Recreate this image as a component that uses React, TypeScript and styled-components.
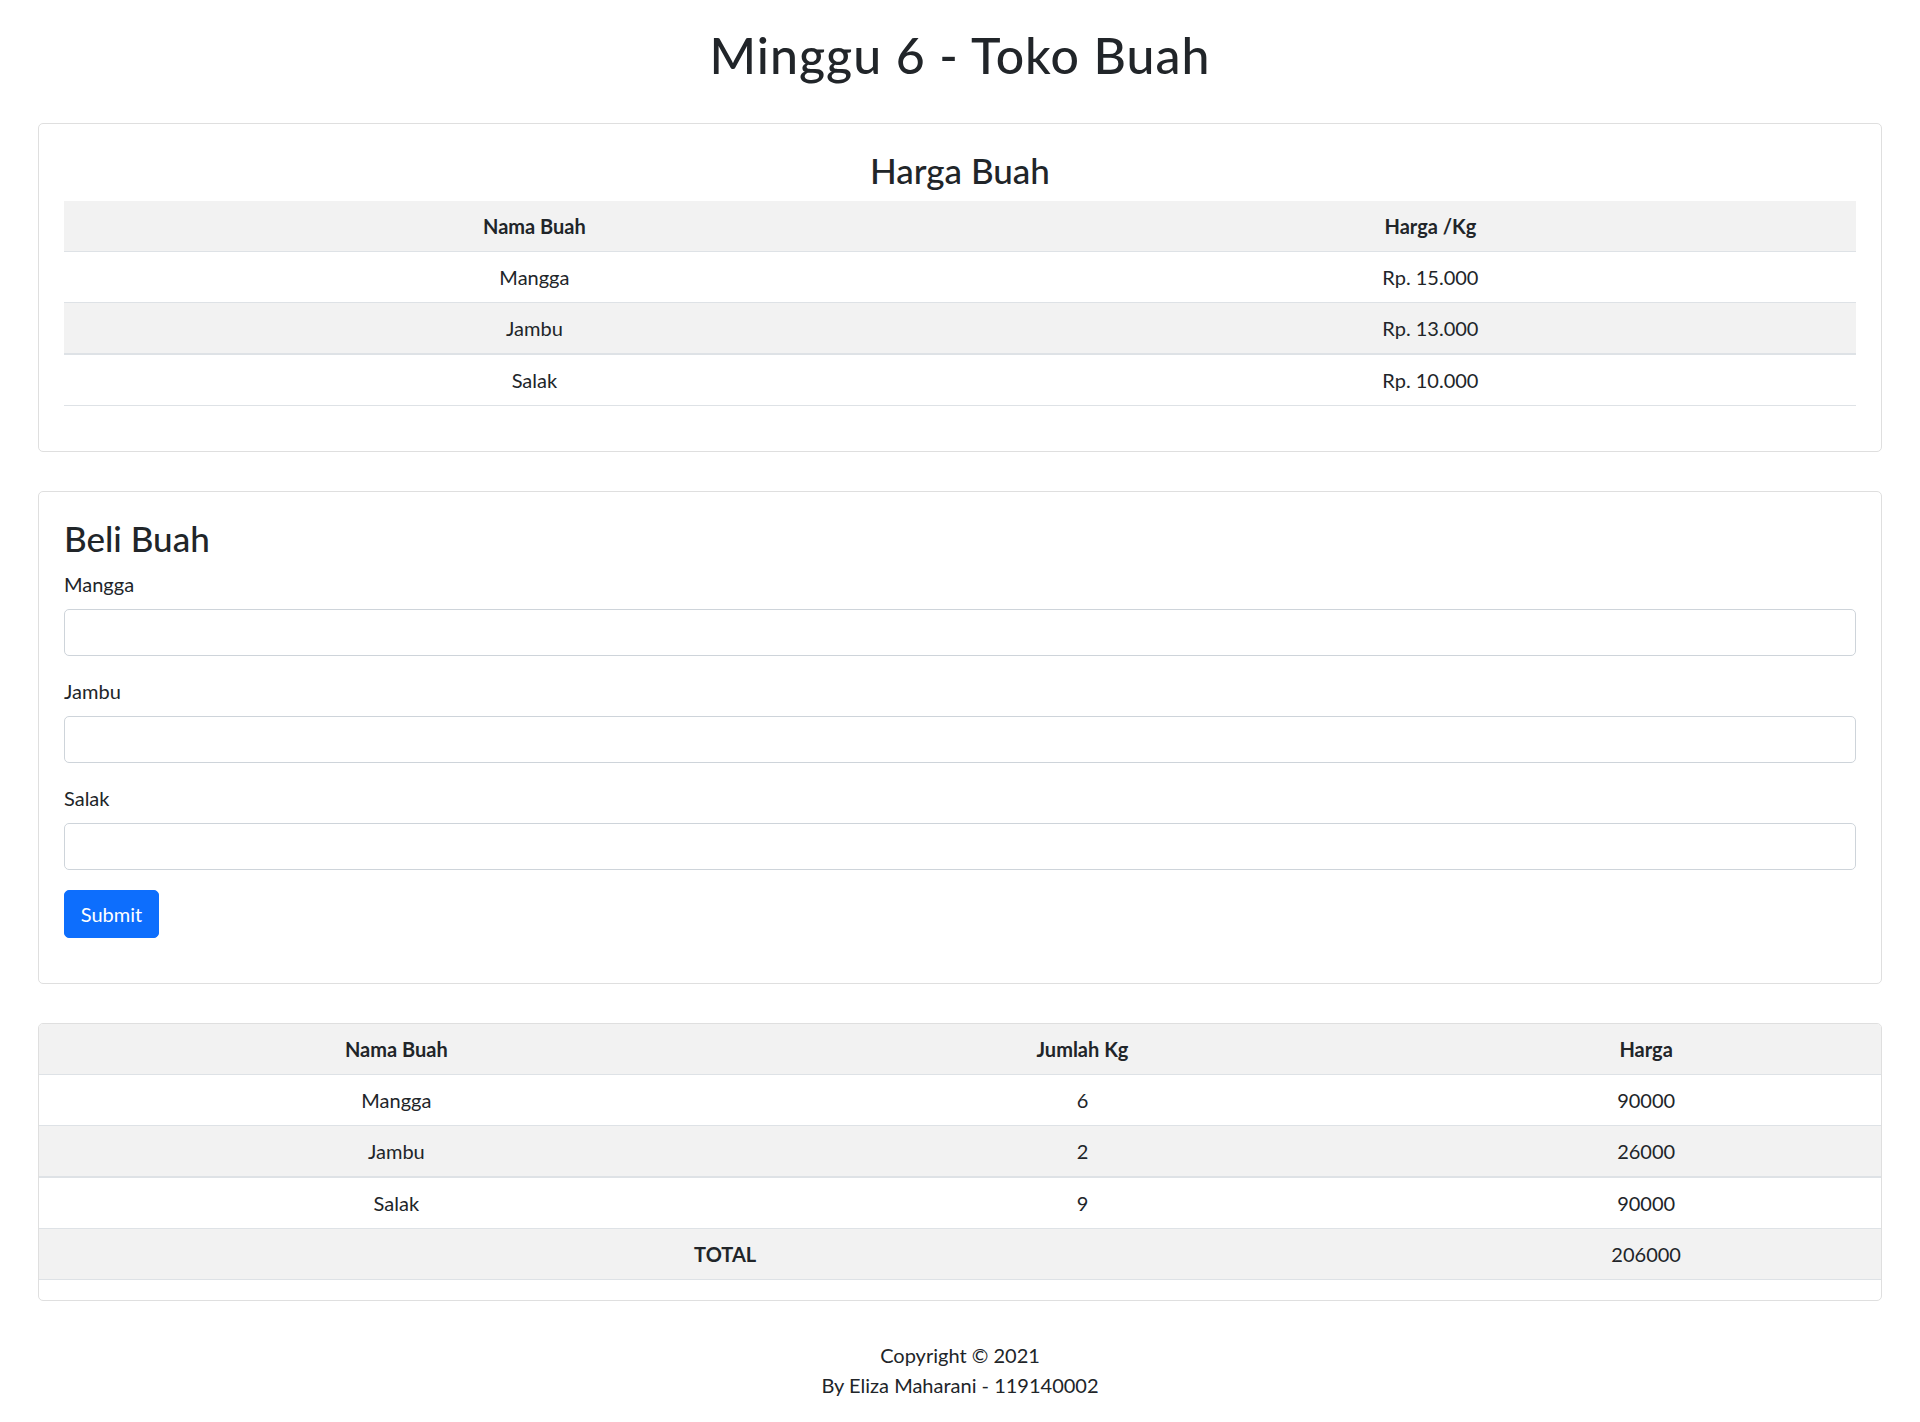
import styled, { createGlobalStyle } from "styled-components";

const GlobalStyle = createGlobalStyle`
  * {
    box-sizing: border-box;
  }
  body {
    margin: 0;
    background: #fff;
    color: #212529;
    font-family: Lato, "Noto Sans", sans-serif;
    font-size: 20px;
    line-height: 1.5;
  }
`;

const Page = styled.main`
  padding: 25px 38px 0;
  display: flex;
  flex-direction: column;
`;

const Title = styled.h1`
  margin: 0 0 38px;
  font-size: 50px;
  font-weight: 500;
  line-height: 1.2;
  letter-spacing: 1px;
  text-align: center;
`;

const Card = styled.section<{ $flush?: boolean }>`
  border: 1px solid #dfdfdf;
  border-radius: 5px;
  padding: ${(p) => (p.$flush ? "0 0 20px" : "25px")};
  margin-bottom: 39px;
  overflow: hidden;
`;

const CardTitle = styled.h3<{ $center?: boolean }>`
  margin: 0 0 10px;
  font-size: 35px;
  font-weight: 500;
  line-height: 1.2;
  text-align: ${(p) => (p.$center ? "center" : "left")};
`;

const Table = styled.table`
  width: 100%;
  border-collapse: collapse;
  margin-bottom: 20px;
`;

const FlushTable = styled(Table)`
  margin-bottom: 0;
`;

const Row = styled.tr<{ $striped?: boolean; $thick?: boolean }>`
  background: ${(p) => (p.$striped ? "#f2f2f2" : "#fff")};
  border-bottom: ${(p) => (p.$thick ? "2px solid #dee2e6" : "1px solid #dee2e6")};
`;

const Cell = styled.td<{ $bold?: boolean }>`
  padding: 10px;
  height: 50px;
  text-align: center;
  font-weight: ${(p) => (p.$bold ? 700 : 400)};
  line-height: 30px;
`;

const Label = styled.label`
  display: block;
  margin-bottom: 10px;
  line-height: 30px;
`;

const Field = styled.div`
  margin-bottom: 20px;
`;

const Input = styled.input`
  display: block;
  width: 100%;
  height: 47px;
  padding: 7px 15px;
  font: inherit;
  border: 1px solid #ced4da;
  border-radius: 5px;
  background: #fff;
`;

const Button = styled.button`
  display: block;
  width: 95px;
  height: 48px;
  margin-bottom: 20px;
  padding: 0;
  font: inherit;
  color: #fff;
  background: #0d6efd;
  border: 1px solid #0d6efd;
  border-radius: 5px;
`;

const Footer = styled.footer`
  text-align: center;
  line-height: 30px;
  padding-bottom: 24px;
`;

const prices = [
  ["Mangga", "Rp. 15.000"],
  ["Jambu", "Rp. 13.000"],
  ["Salak", "Rp. 10.000"],
];

const orders = [
  ["Mangga", "6", "90000"],
  ["Jambu", "2", "26000"],
  ["Salak", "9", "90000"],
];

export default function App() {
  return (
    <>
      <GlobalStyle />
      <Page>
        <Title>Minggu 6 - Toko Buah</Title>

        <Card>
          <CardTitle $center>Harga Buah</CardTitle>
          <Table>
            <colgroup>
              <col style={{ width: "52.5%" }} />
              <col />
            </colgroup>
            <tbody>
              <Row $striped>
                <Cell as="th" $bold>Nama Buah</Cell>
                <Cell as="th" $bold>Harga /Kg</Cell>
              </Row>
              {prices.map(([name, price], i) => (
                <Row key={name} $striped={i === 1} $thick={i === 1}>
                  <Cell>{name}</Cell>
                  <Cell>{price}</Cell>
                </Row>
              ))}
            </tbody>
          </Table>
        </Card>

        <Card>
          <CardTitle>Beli Buah</CardTitle>
          {["Mangga", "Jambu", "Salak"].map((name) => (
            <Field key={name}>
              <Label htmlFor={name}>{name}</Label>
              <Input id={name} type="text" />
            </Field>
          ))}
          <Button type="button">Submit</Button>
        </Card>

        <Card $flush>
          <FlushTable>
            <colgroup>
              <col style={{ width: "38.8%" }} />
              <col style={{ width: "35.7%" }} />
              <col />
            </colgroup>
            <tbody>
              <Row $striped>
                <Cell as="th" $bold>Nama Buah</Cell>
                <Cell as="th" $bold>Jumlah Kg</Cell>
                <Cell as="th" $bold>Harga</Cell>
              </Row>
              {orders.map(([name, kg, total], i) => (
                <Row key={name} $striped={i === 1} $thick={i === 1}>
                  <Cell>{name}</Cell>
                  <Cell>{kg}</Cell>
                  <Cell>{total}</Cell>
                </Row>
              ))}
              <Row $striped>
                <Cell as="th" colSpan={2} $bold>TOTAL</Cell>
                <Cell>206000</Cell>
              </Row>
            </tbody>
          </FlushTable>
        </Card>

        <Footer>
          Copyright © 2021
          <br />
          By Eliza Maharani - 119140002
        </Footer>
      </Page>
    </>
  );
}
